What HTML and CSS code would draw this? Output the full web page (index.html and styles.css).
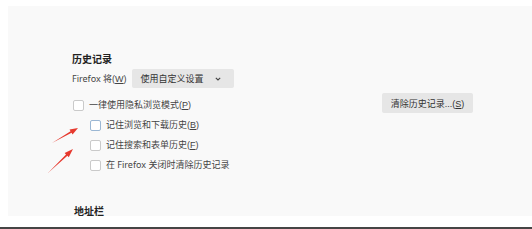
FILE: index.html
```html
<!DOCTYPE html>
<html lang="zh-CN">
<head>
    <meta charset="UTF-8">
    <meta name="viewport" content="width=device-width, initial-scale=1.0">
    <title>隐私与安全</title>
    <link rel="stylesheet" href="styles.css">
</head>
<body>

    <div class="prefs">
        <section class="history">
            <h2 class="section-title">历史记录</h2>
            <div class="mode-row">
                <span class="label">Firefox 将<span class="key" lang="en">(<u>W</u>)</span></span>
                <div class="select">
                    <span>使用自定义设置</span>
                    <svg class="chevron" width="6" height="4" viewBox="0 0 6 4"><path d="M0.8 0.8 L3 3 L5.2 0.8" fill="none" stroke="#444" stroke-width="1.1"/></svg>
                </div>
            </div>
            <div class="option-row">
                <label class="check"><span class="box"></span><span>一律使用隐私浏览模式<span class="key" lang="en">(<u>P</u>)</span></span></label>
                <button class="clear-button">清除历史记录<span class="key" lang="en">...(<u>S</u>)</span></button>
            </div>
            <div class="sub-options">
                <label class="check"><span class="box focused"></span><span>记住浏览和下载历史<span class="key" lang="en">(<u>B</u>)</span></span></label>
                <label class="check"><span class="box"></span><span>记住搜索和表单历史<span class="key" lang="en">(<u>F</u>)</span></span></label>
                <label class="check"><span class="box"></span><span>在 Firefox 关闭时清除历史记录</span></label>
            </div>
        </section>
        <h2 class="section-title address">地址栏</h2>
    </div>
    <div class="taskbar"></div>

    <!-- annotation arrows drawn over the screenshot -->
    <svg class="arrows" width="532" height="229" viewBox="0 0 532 229">
        <polygon points="52,143 71.55,132.87 72.55,134.6 78,128 69.55,129.4 70.55,131.13" fill="#e6392e"/>
        <polygon points="48,173 67.39,155.82 68.77,157.26 73,149 64.63,152.94 66.01,154.38" fill="#e6392e"/>
    </svg>
</body>
</html>
```

FILE: styles.css
```css
    body {
        font-family: "Noto Sans", "Noto Sans CJK SC", sans-serif;
        background-color: #ffffff;
        color: #444444;
        margin: 0;
        padding: 0;
        width: 532px;
        height: 229px;
        overflow: hidden;
        position: relative;
        text-autospace: no-autospace;
    }
    .prefs {
        margin: 6px 0 0 8px;
        height: 210px;
        background-color: #f9f9f9;
        padding: 46px 0 0 64px;
        box-sizing: border-box;
        overflow: hidden;
    }
    .history {
        width: 401px;
    }
    .section-title {
        font-size: 10px;
        font-weight: bold;
        line-height: 14px;
        color: #222222;
        margin: 0;
    }
    .address {
        margin-top: 29px;
        margin-left: 2px;
    }
    .key {
        font-family: "Liberation Sans", sans-serif;
    }
    .mode-row {
        display: flex;
        align-items: center;
        gap: 5px;
        margin-top: 3px;
        font-size: 9px;
    }
    .select {
        display: flex;
        align-items: center;
        justify-content: space-between;
        width: 102px;
        height: 19px;
        padding: 0 13px 0 9px;
        box-sizing: border-box;
        background-color: #e6e6e6;
        border-radius: 2px;
        color: #333333;
    }
    .option-row {
        display: flex;
        justify-content: space-between;
        align-items: center;
        margin-top: 7px;
    }
    .check {
        display: flex;
        align-items: center;
        gap: 5px;
        height: 20px;
        font-size: 9px;
        line-height: 12px;
        padding-left: 1px;
    }
    .box {
        width: 11px;
        height: 11px;
        box-sizing: border-box;
        border: 1px solid #cacaca;
        border-radius: 2px;
        background-color: #ffffff;
    }
    .box.focused {
        border-color: #9bb7d4;
    }
    .clear-button {
        width: 91px;
        height: 20px;
        margin-top: -4px;
        padding: 0;
        border: none;
        border-radius: 2px;
        background-color: #e6e6e6;
        color: #333333;
        font-family: inherit;
        font-size: 9px;
    }
    .sub-options {
        padding-left: 17px;
    }
    .taskbar {
        margin-top: 11px;
        height: 4px;
        background-color: #454545;
    }
    .arrows {
        position: absolute;
        top: 0;
        left: 0;
    }
```
